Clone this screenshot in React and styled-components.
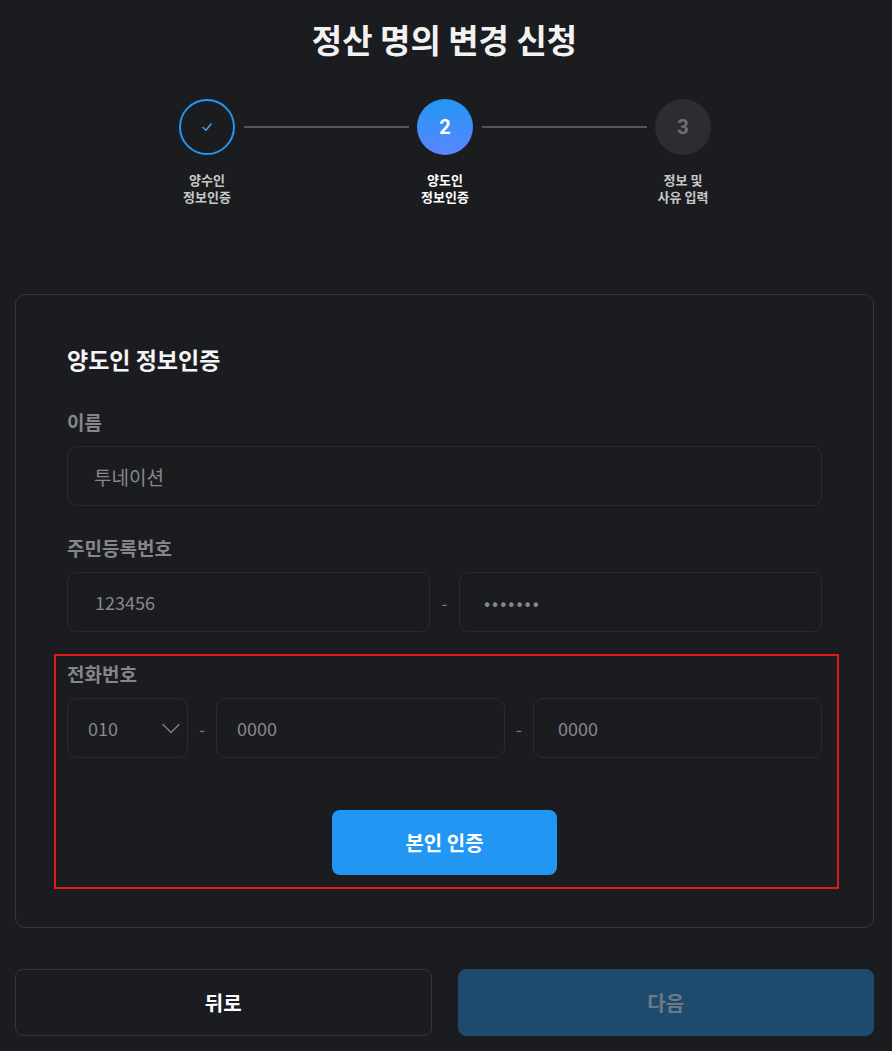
import React from "react";
import styled, { createGlobalStyle } from "styled-components";

const GlobalStyle = createGlobalStyle`
  html, body {
    margin: 0;
    padding: 0;
    background: #1b1c20;
  }
  body {
    font-family: "Noto Sans CJK KR", "Noto Sans", sans-serif;
    color: #fff;
  }
  * { box-sizing: border-box; }
`

const Page = styled.div`
  width: 892px;
  min-height: 1051px;
  padding: 13px 18px 16px 15px;
  display: flex;
  flex-direction: column;
`

const Title = styled.h1`
  margin: 0;
  text-align: center;
  font-size: 33px;
  font-weight: 700;
  line-height: 52px;
  color: #f2f2f2;
`

const Stepper = styled.div`
  display: flex;
  align-items: flex-start;
  justify-content: center;
  margin-top: 34px;
  padding-left: 1px;
`

const Step = styled.div`
  width: 56px;
  display: flex;
  flex-direction: column;
  align-items: center;
`

const Circle = styled.div`
  width: 56px;
  height: 56px;
  border-radius: 50%;
  display: flex;
  align-items: center;
  justify-content: center;
  font-family: Roboto, "Noto Sans", sans-serif;
  font-size: 20px;
  font-weight: 700;
  border: ${p => (p.$state === "done" ? "2px solid #2196f3" : "none")};
  background: ${p =>
    p.$state === "active"
      ? "linear-gradient(180deg, #2196f3 0%, #5b86ff 100%)"
      : p.$state === "done"
      ? "transparent"
      : "#2c2d31"};
  color: ${p => (p.$state === "active" ? "#fff" : "#6f7075")};
`

const StepLabel = styled.div`
  margin-top: 16px;
  white-space: nowrap;
  text-align: center;
  font-size: 13px;
  font-weight: 700;
  line-height: 17px;
  color: ${p => (p.$active ? "#ffffff" : "#c8c8c8")};
`

const Connector = styled.div`
  width: 165px;
  height: 2px;
  margin: 27px 8px 0 9px;
  background: #55565b;
`

const Card = styled.section`
  margin-top: 89px;
  border: 1px solid #35363a;
  border-radius: 10px;
  padding: 48px 51px 38px;
`

const CardTitle = styled.h2`
  margin: 0 0 35px;
  font-size: 23px;
  font-weight: 700;
  line-height: 32px;
  color: #f4f4f4;
`

const Field = styled.div`
  margin-bottom: ${p => p.$mb || 30}px;
`

const Label = styled.div`
  font-size: 19px;
  font-weight: 700;
  line-height: 24px;
  color: #85868a;
  margin-bottom: 12px;
`

const PairRow = styled.div`
  display: grid;
  grid-template-columns: 1fr 29px 1fr;
  align-items: center;
`

const PhoneRow = styled.div`
  display: grid;
  grid-template-columns: 121px 28px 1fr 28px 1fr;
  align-items: center;
`

const Box = styled.div`
  height: 60px;
  border: 1px solid #2b2c30;
  border-radius: 10px;
  display: flex;
  align-items: center;
  justify-content: space-between;
  padding: 0 ${p => p.$pr || 20}px 0 ${p => p.$pl || 20}px;
  font-size: ${p => p.$fs || 18}px;
  color: #87888c;
  letter-spacing: ${p => p.$ls || 0}px;
`

const Dash = styled.span`
  text-align: center;
  color: #808185;
  font-size: 17px;
`

const Highlight = styled.div`
  margin: 0 -17px 0 -13px;
  padding: 6px 15px 12px 11px;
  border: 2px solid #e01a1a;
`

const Center = styled.div`
  display: flex;
  justify-content: center;
  margin-top: 52px;
`

const VerifyButton = styled.button`
  width: 225px;
  height: 65px;
  border: none;
  border-radius: 8px;
  background: #2196f3;
  color: #fff;
  font-family: inherit;
  font-size: 20px;
  font-weight: 700;
`

const Footer = styled.div`
  display: grid;
  grid-template-columns: 1fr 1fr;
  gap: 26px;
  margin-top: 41px;
`

const FooterButton = styled.button`
  height: 67px;
  border-radius: 8px;
  font-family: inherit;
  font-size: 20px;
  font-weight: 700;
  border: 1px solid ${p => (p.$primary ? "#1e4a70" : "#35363a")};
  background: ${p => (p.$primary ? "#1e4a70" : "transparent")};
  color: ${p => (p.$primary ? "#6d7a86" : "#ffffff")};
`

const Check = () => (
  <svg width="14" height="14" viewBox="0 0 14 14" fill="none">
    <polyline points="3,7.5 6,10.2 11,4" stroke="#5a9de8" strokeWidth="1.4" strokeLinecap="round" strokeLinejoin="round" />
  </svg>
)

const Chevron = () => (
  <svg width="18" height="11" viewBox="0 0 18 11" fill="none">
    <polyline points="1,1.5 9,9.5 17,1.5" stroke="#85868a" strokeWidth="1.2" strokeLinecap="round" strokeLinejoin="round" />
  </svg>
)

const steps = [
  { state: "done", lines: ["양수인", "정보인증"] },
  { state: "active", n: 2, lines: ["양도인", "정보인증"] },
  { state: "todo", n: 3, lines: ["정보 및", "사유 입력"] },
]

const App = () => {
  return (
    <Page>
      <GlobalStyle />
      <Title>정산 명의 변경 신청</Title>

      <Stepper>
        {steps.map((s, i) => (
          <React.Fragment key={i}>
            {i > 0 && <Connector />}
            <Step>
              <Circle $state={s.state}>{s.state === "done" ? <Check /> : s.n}</Circle>
              <StepLabel $active={s.state === "active"}>
                {s.lines[0]}
                <br />
                {s.lines[1]}
              </StepLabel>
            </Step>
          </React.Fragment>
        ))}
      </Stepper>

      <Card>
        <CardTitle>양도인 정보인증</CardTitle>

        <Field $mb={30}>
          <Label>이름</Label>
          <Box $pl={26} $fs={19}>투네이션</Box>
        </Field>

        <Field $mb={22}>
          <Label>주민등록번호</Label>
          <PairRow>
            <Box $pl={27}>123456</Box>
            <Dash>-</Dash>
            <Box $pl={24} $ls={2}>•••••••</Box>
          </PairRow>
        </Field>

        <Highlight>
          <Label>전화번호</Label>
          <PhoneRow>
            <Box $pl={20} $pr={7}>
              010
              <Chevron />
            </Box>
            <Dash>-</Dash>
            <Box>0000</Box>
            <Dash>-</Dash>
            <Box $pl={24}>0000</Box>
          </PhoneRow>
          <Center>
            <VerifyButton>본인 인증</VerifyButton>
          </Center>
        </Highlight>
      </Card>

      <Footer>
        <FooterButton>뒤로</FooterButton>
        <FooterButton $primary>다음</FooterButton>
      </Footer>
    </Page>
  );
};

export default App;
